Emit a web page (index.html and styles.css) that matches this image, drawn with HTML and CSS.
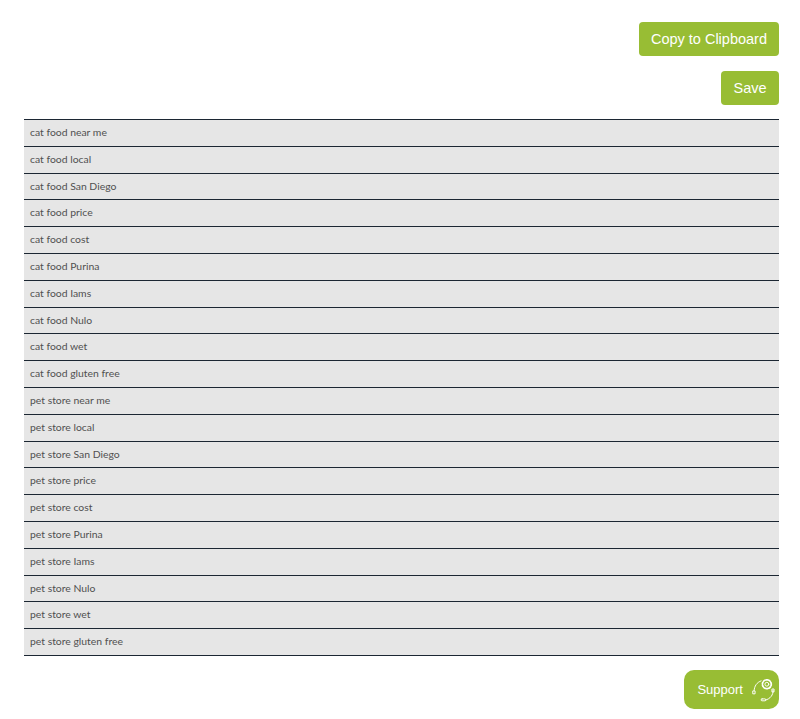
FILE: index.html
```html
<!DOCTYPE html>
<html lang="en">
<head>
<meta charset="utf-8">
<title>Keywords</title>
<link rel="stylesheet" href="styles.css">
</head>
<body>
<main class="page">
  <div class="actions">
    <button class="btn" type="button">Copy to Clipboard</button>
    <button class="btn btn-save" type="button">Save</button>
  </div>
  <ul class="keywords">
    <li>cat food near me</li>
    <li>cat food local</li>
    <li>cat food San Diego</li>
    <li>cat food price</li>
    <li>cat food cost</li>
    <li>cat food Purina</li>
    <li>cat food Iams</li>
    <li>cat food Nulo</li>
    <li>cat food wet</li>
    <li>cat food gluten free</li>
    <li>pet store near me</li>
    <li>pet store local</li>
    <li>pet store San Diego</li>
    <li>pet store price</li>
    <li>pet store cost</li>
    <li>pet store Purina</li>
    <li>pet store Iams</li>
    <li>pet store Nulo</li>
    <li>pet store wet</li>
    <li>pet store gluten free</li>
  </ul>
  <div class="support-row">
    <a class="support" href="#">Support
      <svg class="support-icon" viewBox="0 0 24 26" width="23" height="25" fill="none" stroke="currentColor" stroke-width="1" stroke-linecap="round" aria-hidden="true">
        <circle cx="15.5" cy="7.5" r="2"/>
        <circle cx="15.5" cy="7.5" r="4.6" stroke-width="1.8" stroke-dasharray="1.6 1.3"/>
        <path d="M9.5 4C5 5.5 2.5 9.5 2.2 14"/>
        <path d="M1.2 14.5h2v3h-2z"/>
        <path d="M22 14c.3 4.5-3 9-8 10"/>
        <path d="M21.2 12.5h1.8v3h-1.8z"/>
        <rect x="9.5" y="22.8" width="5" height="2" rx="1"/>
      </svg>
    </a>
  </div>
</main>
</body>
</html>
```
FILE: styles.css
```css
html, body {
  margin: 0;
  padding: 0;
  background: #fff;
}
.page {
  padding: 22px 21px 0 24px;
}
.actions {
  display: flex;
  flex-direction: column;
  align-items: flex-end;
  gap: 15px;
}
.btn {
  height: 34px;
  padding: 0 12px;
  border: 0;
  border-radius: 4px;
  background: #98bd34;
  color: #fff;
  font: 14.5px/33px "Liberation Sans", Arial, sans-serif;
}
.btn-save {
  min-width: 58px;
}
.keywords {
  list-style: none;
  margin: 14px 0 0;
  padding: 0;
  border-bottom: 1px solid #1c2733;
}
.keywords li {
  height: 25.8px;
  padding-left: 6px;
  border-top: 1px solid #1c2733;
  background: #e6e6e6;
  color: #505050;
  font: 10.4px/25px Lato, sans-serif;
}
.support-row {
  display: flex;
  justify-content: flex-end;
  margin-top: 14px;
}
.support {
  display: flex;
  align-items: center;
  gap: 9px;
  height: 39px;
  padding: 0 4px 0 13px;
  border-radius: 10px;
  background: #98bd34;
  color: #fff;
  font: 13px "Liberation Sans", Arial, sans-serif;
  text-decoration: none;
}
.support-icon {
  flex: none;
}
```
